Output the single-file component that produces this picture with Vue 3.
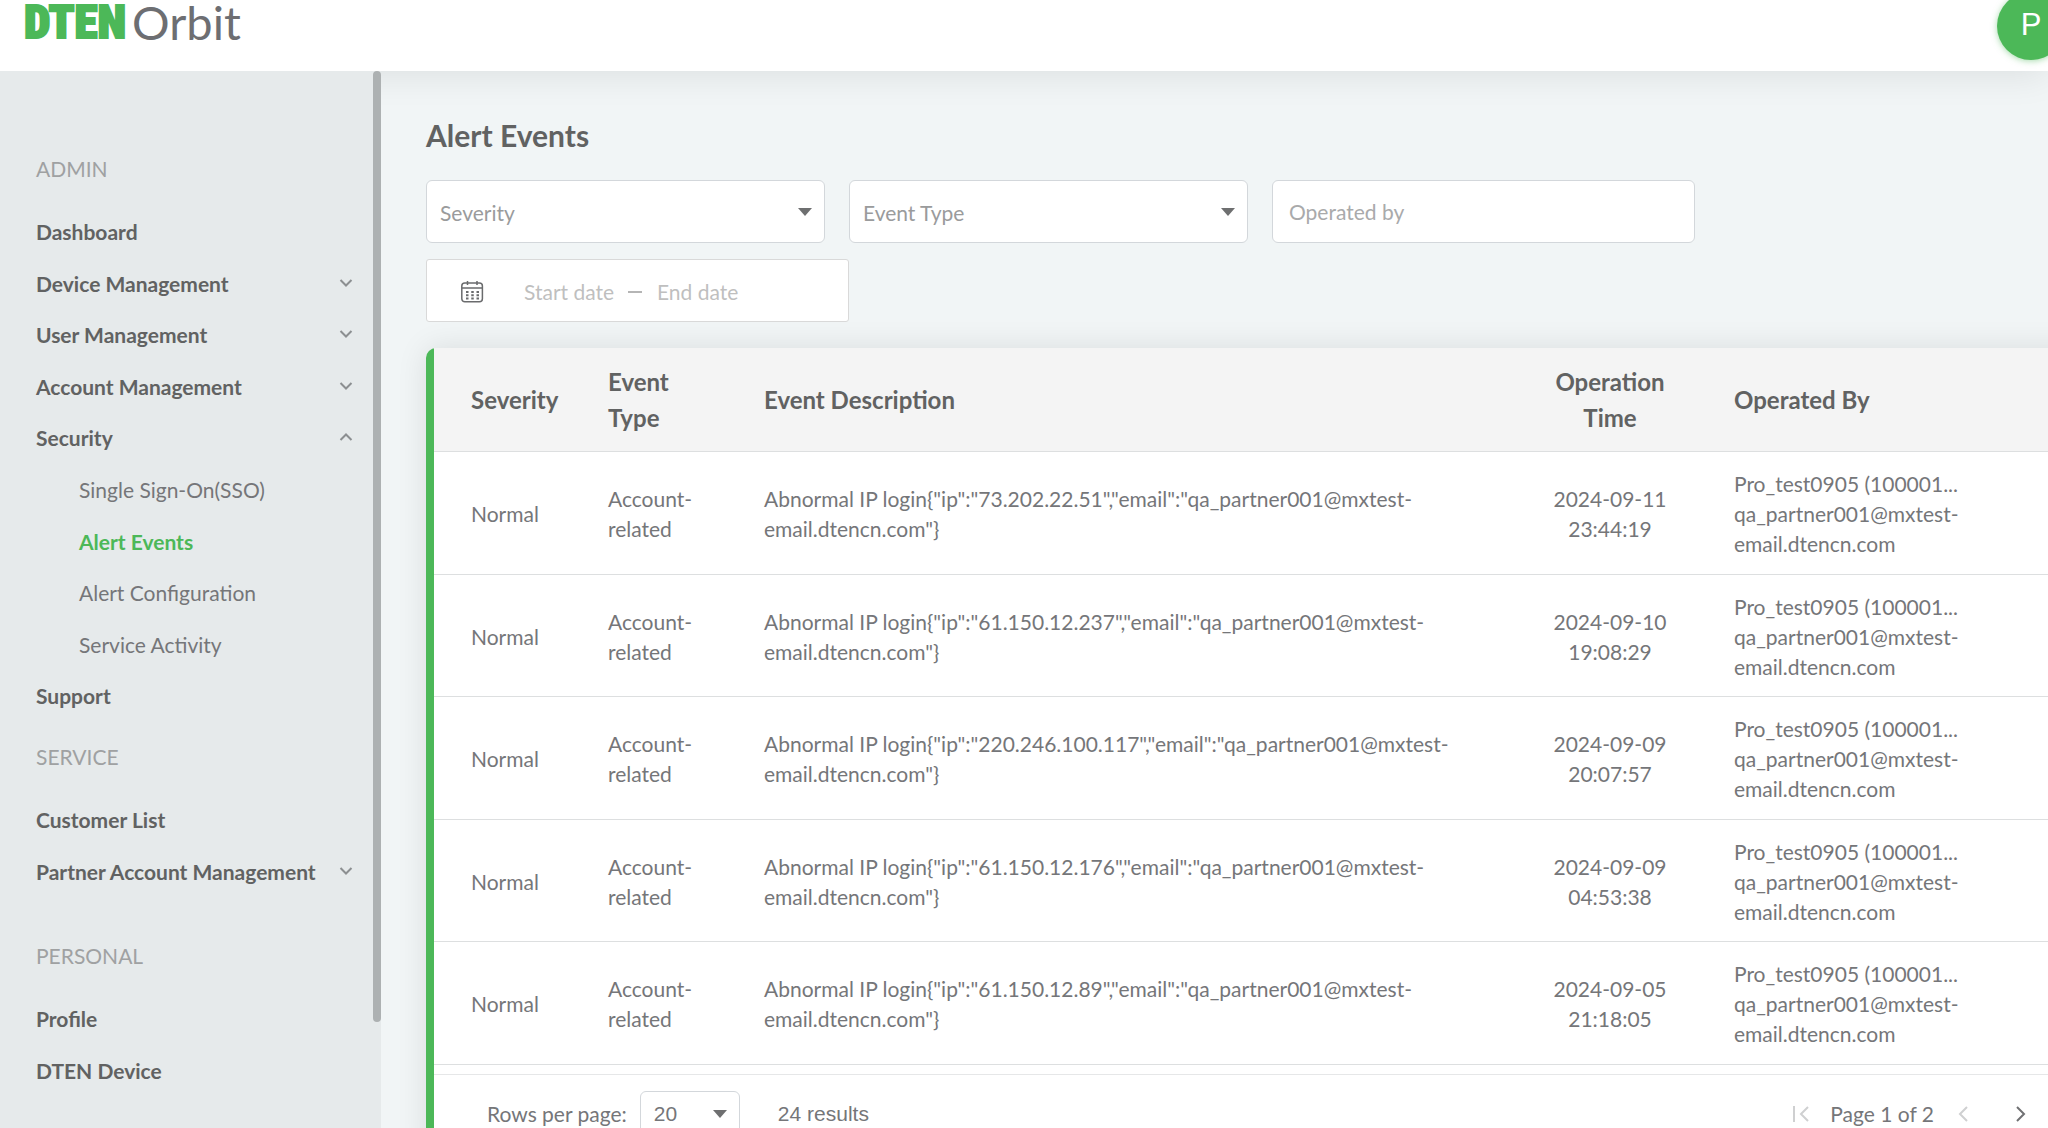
<script setup>
import { ref } from 'vue'

const sections = [
  {
    title: 'ADMIN',
    items: [
      { label: 'Dashboard' },
      { label: 'Device Management', toggle: 'down' },
      { label: 'User Management', toggle: 'down' },
      { label: 'Account Management', toggle: 'down' },
      {
        label: 'Security',
        toggle: 'up',
        children: [
          { label: 'Single Sign-On(SSO)' },
          { label: 'Alert Events', active: true },
          { label: 'Alert Configuration' },
          { label: 'Service Activity' }
        ]
      },
      { label: 'Support' }
    ]
  },
  {
    title: 'SERVICE',
    items: [
      { label: 'Customer List' },
      { label: 'Partner Account Management', toggle: 'down' }
    ]
  },
  {
    title: 'PERSONAL',
    spaced: true,
    items: [{ label: 'Profile' }, { label: 'DTEN Device' }]
  }
]

const events = [
  { ip: '73.202.22.51', date: '2024-09-11', time: '23:44:19' },
  { ip: '61.150.12.237', date: '2024-09-10', time: '19:08:29' },
  { ip: '220.246.100.117', date: '2024-09-09', time: '20:07:57' },
  { ip: '61.150.12.176', date: '2024-09-09', time: '04:53:38' },
  { ip: '61.150.12.89', date: '2024-09-05', time: '21:18:05' }
]

const describe = (ip) =>
  `Abnormal IP login{"ip":"${ip}","email":"qa_partner001@mxtest-email.dtencn.com"}`

const severity = ref('')
const eventType = ref('')
const operator = ref('')
const startDate = ref('')
const endDate = ref('')
const pageSize = ref('20')
</script>

<template>
  <div class="shell">
    <header class="topbar">
      <a class="logo" href="#"><span class="logo-mark">DTEN</span><span class="logo-name">Orbit</span></a>
      <button class="avatar" type="button" aria-label="Account">P</button>
    </header>

    <div class="body">
      <aside class="sidebar">
        <nav>
          <section v-for="s in sections" :key="s.title" :class="['group', { spaced: s.spaced }]">
            <h2 class="group-title">{{ s.title }}</h2>
            <ul>
              <li v-for="i in s.items" :key="i.label">
                <a class="item" href="#">
                  <span>{{ i.label }}</span>
                  <svg v-if="i.toggle" class="chevron" viewBox="0 0 14 10" width="14" height="10" aria-hidden="true">
                    <path :d="i.toggle === 'down' ? 'M1.5 1 7 6.5 12.5 1' : 'M1.5 7 7 1.500 12.5 7'" />
                  </svg>
                </a>
                <ul v-if="i.children">
                  <li v-for="c in i.children" :key="c.label">
                    <a :class="['subitem', { active: c.active }]" href="#">{{ c.label }}</a>
                  </li>
                </ul>
              </li>
            </ul>
          </section>
        </nav>
        <div class="scroll-thumb"></div>
      </aside>

      <main class="content">
        <h1>Alert Events</h1>

        <form class="filters" @submit.prevent>
          <div class="select-box">
            <select v-model="severity" aria-label="Severity">
              <option value="">Severity</option>
            </select>
            <svg class="caret" viewBox="0 0 14 8" width="14" height="8" aria-hidden="true"><path d="M0 0h14L7 8z" /></svg>
          </div>
          <div class="select-box">
            <select v-model="eventType" aria-label="Event Type">
              <option value="">Event Type</option>
            </select>
            <svg class="caret" viewBox="0 0 14 8" width="14" height="8" aria-hidden="true"><path d="M0 0h14L7 8z" /></svg>
          </div>
          <input v-model="operator" class="text-box" type="text" placeholder="Operated by" aria-label="Operated by" />
          <div class="date-box">
            <svg class="calendar" viewBox="0 0 24 24" width="24" height="24" aria-hidden="true">
              <rect x="1.8" y="3" width="20.6" height="18.8" rx="3" />
              <path d="M2 8h20.400M7.500 1v4M17 1v4" />
              <path class="dots" d="M6 12h13M6 15.200h13M6 18.400h13" />
            </svg>
            <input v-model="startDate" type="text" placeholder="Start date" aria-label="Start date" />
            <span class="dash"></span>
            <input v-model="endDate" type="text" placeholder="End date" aria-label="End date" />
          </div>
        </form>

        <section class="card">
          <table>
            <colgroup>
              <col class="c-severity" />
              <col class="c-type" />
              <col />
              <col class="c-time" />
              <col class="c-operator" />
            </colgroup>
            <thead>
              <tr>
                <th>Severity</th>
                <th class="narrow">Event Type</th>
                <th>Event Description</th>
                <th class="narrow time">Operation Time</th>
                <th>Operated By</th>
              </tr>
            </thead>
            <tbody>
              <tr v-for="e in events" :key="e.ip">
                <td>Normal</td>
                <td>Account-related</td>
                <td>{{ describe(e.ip) }}</td>
                <td class="time">{{ e.date }}<br />{{ e.time }}</td>
                <td>
                  <div class="operator">
                    <div>Pro_test0905 (100001...</div>
                    <div>qa_partner001@mxtest-email.dtencn.com</div>
                  </div>
                </td>
              </tr>
            </tbody>
          </table>

          <footer class="pager">
            <label for="page-size">Rows per page:</label>
            <div class="size-box">
              <select id="page-size" v-model="pageSize">
                <option>20</option>
              </select>
              <svg class="caret" viewBox="0 0 14 8" width="14" height="8" aria-hidden="true"><path d="M0 0h14L7 8z" /></svg>
            </div>
            <span class="results">24 results</span>
            <div class="pages">
              <button type="button" disabled aria-label="First page">
                <svg viewBox="0 0 18 16" width="18" height="16"><path d="M2 0v16M16 1 9 8l7 7" /></svg>
              </button>
              <span class="page-label">Page 1 of 2</span>
              <button type="button" disabled aria-label="Previous page">
                <svg viewBox="0 0 10 16" width="10" height="16"><path d="M9 1 2 8l7 7" /></svg>
              </button>
              <button class="next" type="button" aria-label="Next page">
                <svg viewBox="0 0 10 16" width="10" height="16"><path d="m1 1 7 7-7 7" /></svg>
              </button>
            </div>
          </footer>
        </section>
      </main>
    </div>
  </div>
</template>

<style>
body {
  margin: 0;
}
</style>

<style scoped>
.shell {
  display: flex;
  flex-direction: column;
  height: 100vh;
  overflow: hidden;
  background: #f1f5f6;
  color: #757679;
  font: 21px/30px Lato, "Noto Sans", sans-serif;
}
.shell *,
.shell *::before {
  box-sizing: border-box;
}
ul,
h1,
h2 {
  margin: 0;
  padding: 0;
  list-style: none;
}
a {
  color: inherit;
  text-decoration: none;
}
input,
select,
button {
  font: inherit;
  color: inherit;
}

.topbar {
  position: relative;
  z-index: 1;
  flex: none;
  display: flex;
  justify-content: space-between;
  height: 71px;
  padding-left: 24px;
  background: #fff;
  box-shadow: 0 4px 36px rgba(0, 0, 0, 0.09);
}
.logo {
  display: flex;
  gap: 6px;
  height: 44px;
  line-height: 44px;
}
.logo-mark {
  color: #4cb858;
  font-family: "Liberation Sans Narrow", "Roboto Condensed", "Open Sans Condensed", "Noto Sans Condensed", "DejaVu Sans Condensed", sans-serif;
  font-size: 47px;
  font-weight: 900;
  -webkit-text-stroke: 2px #4cb858;
}
.logo-name {
  color: #6d6e72;
  font-size: 47px;
}
.avatar {
  width: 68px;
  height: 68px;
  margin: -8px -17px 0 0;
  padding: 0 0 2px;
  border: 0;
  border-radius: 50%;
  background: #4cb858;
  box-shadow: 0 1px 6px rgba(76, 184, 88, 0.5);
  color: #fff;
  font: 31px "Liberation Sans", sans-serif;
}

.body {
  flex: 1;
  display: flex;
  min-height: 0;
}
.sidebar {
  position: relative;
  z-index: 2;
  flex: none;
  width: 381px;
  padding: 64px 28px 0 36px;
  background: #e6eaeb;
  overflow: hidden;
}
.scroll-thumb {
  position: absolute;
  top: 0;
  right: 0;
  width: 8px;
  height: 90%;
  border-radius: 4px;
  background: #adb1b2;
}
.group-title {
  margin-bottom: 3px;
  color: #9fa1a2;
  font-size: 21px;
  font-weight: 400;
  line-height: 68px;
}
.group + .group {
  margin-top: 2px;
}
.group + .spaced {
  margin-top: 25px;
}
.item {
  display: flex;
  align-items: center;
  justify-content: space-between;
  height: 51px;
  color: #616262;
  font-weight: 700;
  white-space: nowrap;
}
.chevron {
  fill: none;
  stroke: #8c8f91;
  stroke-width: 2;
}
.subitem {
  display: flex;
  align-items: center;
  height: 51px;
  padding-left: 43px;
}
li:nth-child(odd) > .item,
li:nth-child(odd) > .subitem {
  height: 52px;
}
.subitem.active {
  color: #4cb858;
  font-weight: 700;
}

.content {
  flex: 1;
  min-width: 0;
  padding: 45px 0 0 45px;
  overflow: hidden;
}
h1 {
  color: #616262;
  font-size: 30px;
  font-weight: 700;
  line-height: 38px;
}
.filters {
  display: flex;
  flex-wrap: wrap;
  gap: 16px 24px;
  margin-top: 26px;
}
.select-box,
.text-box,
.date-box {
  height: 63px;
  border: 1px solid #d3d7db;
  border-radius: 6px;
  background: #fff;
}
.select-box {
  position: relative;
  width: 399px;
}
select {
  width: 100%;
  height: 100%;
  padding: 0 40px 0 13px;
  border: 0;
  background: none;
  appearance: none;
  outline: 0;
}
.select-box select {
  padding-top: 2px;
  color: #9a9b9c;
}
.caret {
  position: absolute;
  top: 50%;
  right: 12px;
  margin-top: -4px;
  fill: #6e6f70;
  pointer-events: none;
}
.text-box,
.date-box {
  width: 423px;
}
.text-box {
  padding: 0 16px;
}
.text-box::placeholder {
  color: #a9aaab;
  opacity: 1;
}
.date-box {
  display: flex;
  align-items: center;
  padding: 2px 0 0 33px;
  border-color: #d9d9d9;
  border-radius: 3px;
}
.calendar {
  margin-right: 40px;
  fill: none;
  stroke: #6a6b6d;
  stroke-width: 1.5;
}
.calendar .dots {
  stroke-width: 2;
  stroke-dasharray: 2.500 2.750;
}
.date-box input {
  width: 104px;
  padding: 0;
  border: 0;
  background: none;
  outline: 0;
}
.date-box input::placeholder {
  color: #bfbfbf;
  opacity: 1;
}
.dash {
  width: 14px;
  height: 2px;
  margin-right: 15px;
  background: #b5b5b5;
}

.card {
  margin: 26px -30px 0 0;
  border-left: 8px solid #4cb858;
  border-top-left-radius: 10px;
  background: #fff;
  box-shadow: 0 0 30px rgba(0, 0, 0, 0.1);
}
table {
  width: 100%;
  border-spacing: 0;
  table-layout: fixed;
}
.c-severity {
  width: 156px;
}
.c-type {
  width: 156px;
}
.c-time {
  width: 212px;
}
.c-operator {
  width: 362px;
}
th,
td {
  padding: 0 18px;
  border-bottom: 1px solid #dddfe0;
  text-align: left;
  vertical-align: middle;
}
th:first-child,
td:first-child {
  padding-right: 0;
  padding-left: 37px;
}
th {
  height: 104px;
  background: #f4f4f4;
  color: #616262;
  font-size: 24px;
  font-weight: 700;
  line-height: 36px;
}
.narrow {
  padding-right: 48px;
}
.narrow.time {
  padding-left: 48px;
}
td {
  height: 122px;
  padding-top: 2px;
}
tr:nth-child(odd) td {
  height: 123px;
}
.time {
  text-align: center;
}
.operator {
  max-width: 240px;
}

.pager {
  display: flex;
  align-items: center;
  height: 79px;
  margin-top: 9px;
  padding-left: 53px;
  border-top: 1px solid #e6e7e8;
}
.size-box {
  position: relative;
  width: 100px;
  height: 46px;
  margin: 0 38px 0 13px;
  border: 1px solid #d3d7db;
  border-radius: 6px;
  font-family: "Liberation Sans", sans-serif;
}
.results {
  font-family: "Liberation Sans", sans-serif;
}
.pages {
  display: flex;
  align-items: center;
  margin-left: auto;
  padding-right: 52px;
}
.pages button {
  display: flex;
  padding: 0;
  border: 0;
  background: none;
}
.pages svg {
  fill: none;
  stroke: #707173;
  stroke-width: 2;
}
.pages button:disabled svg {
  stroke: #cfd0d1;
}
.page-label {
  margin: 0 24px 0 20px;
}
.pages .next {
  margin-left: 48px;
}
</style>
